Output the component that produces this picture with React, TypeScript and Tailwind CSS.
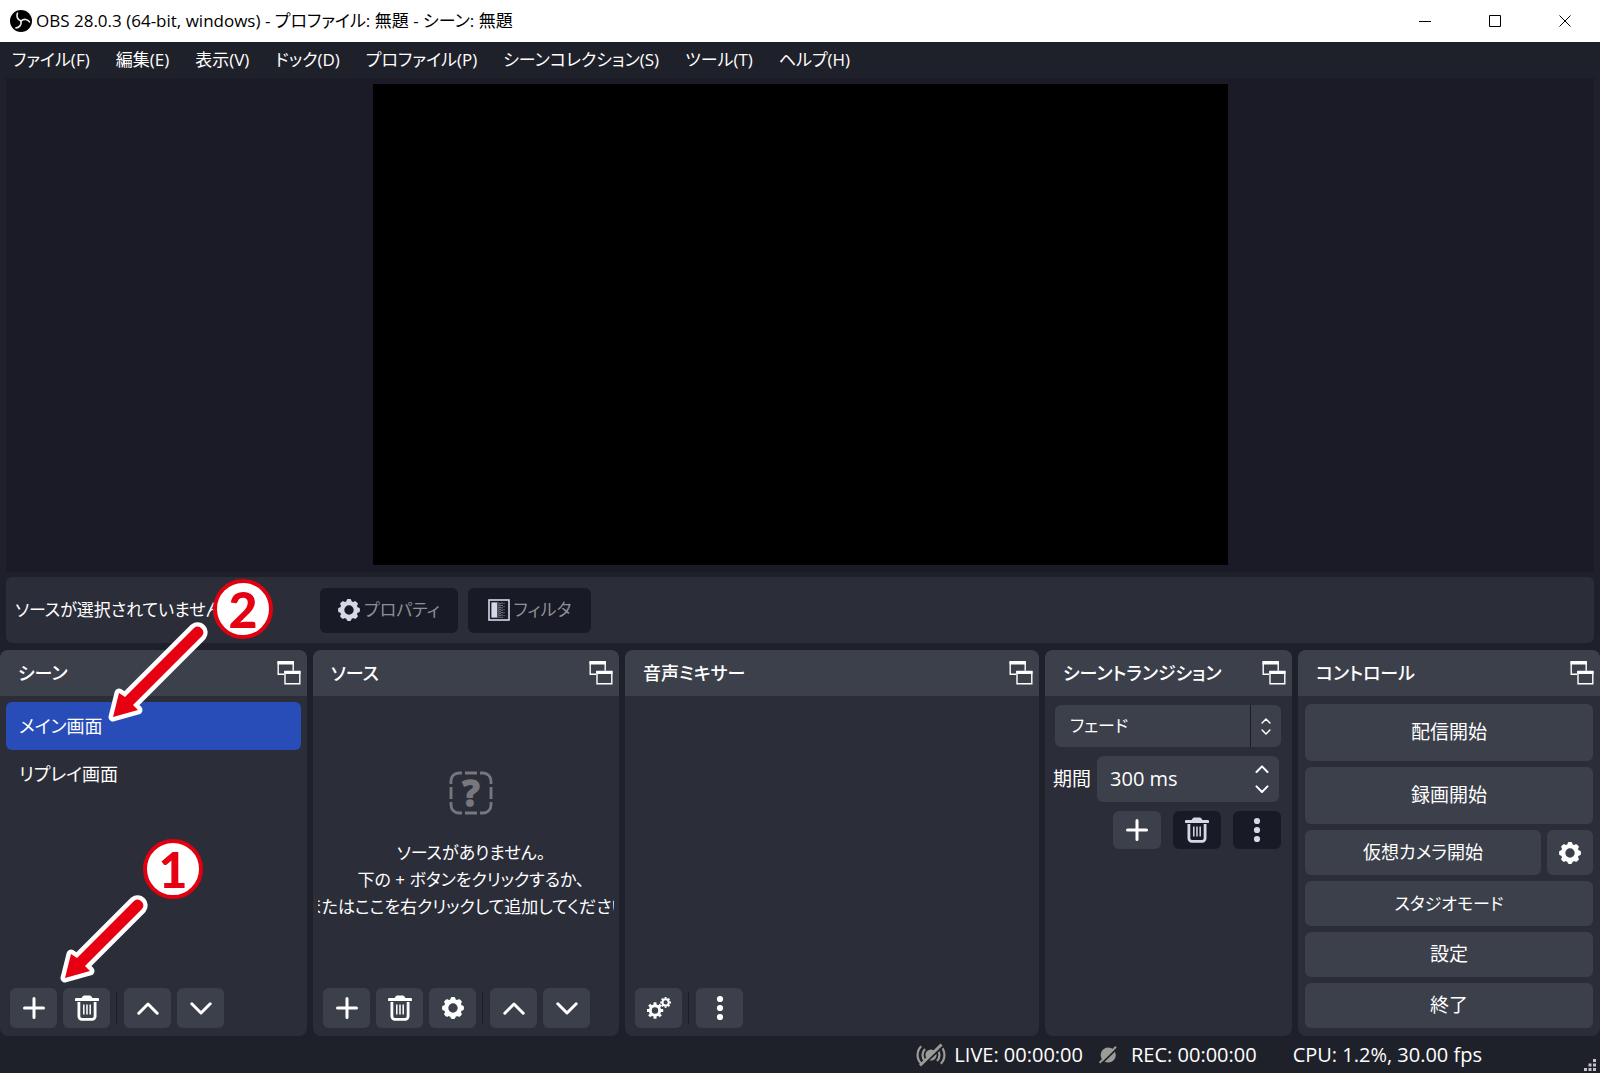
import type { ReactNode } from "react";

const menus = [
  "ファイル(F)",
  "編集(E)",
  "表示(V)",
  "ドック(D)",
  "プロファイル(P)",
  "シーンコレクション(S)",
  "ツール(T)",
  "ヘルプ(H)",
];

const scenes = [
  { name: "メイン画面", selected: true },
  { name: "リプレイ画面", selected: false },
];

function ObsLogo() {
  return (
    <svg width="22" height="22" viewBox="0 0 22 22" fill="none">
      <circle cx="11" cy="11" r="11" fill="#000" />
      {[0, 120, 240].map((a) => (
        <path key={a} d="M7.5 3.2C6.1 6 7.2 9.6 11 11" transform={`rotate(${a} 11 11)`} stroke="#e8e8e8" strokeWidth="1.7" strokeLinecap="round" />
      ))}
    </svg>
  );
}

function PlusIcon() {
  return (
    <svg width="22" height="22" viewBox="0 0 22 22" stroke="currentColor" strokeWidth="3" strokeLinecap="round">
      <path d="M11 1.5v19M1.5 11h19" />
    </svg>
  );
}

function TrashIcon() {
  return (
    <svg width="24" height="26" viewBox="0 0 24 26" fill="none" stroke="currentColor">
      <path d="M1.2 4.6h21.6" strokeWidth="3" strokeLinecap="round" />
      <path d="M7 3l1.5-2h7L17 3z" fill="currentColor" strokeWidth="1" />
      <path d="M3.9 7v14.3a3 3 0 0 0 3 3h10.2a3 3 0 0 0 3-3V7" strokeWidth="2.8" />
      <path d="M8.8 9.5v10M12 9.5v10M15.2 9.5v10" strokeWidth="1.5" />
    </svg>
  );
}

function ChevronIcon({ down = false }: { down?: boolean }) {
  return (
    <svg width="22" height="13" viewBox="0 0 22 13" fill="none" stroke="currentColor" strokeWidth="3" strokeLinecap="round" strokeLinejoin="round">
      <path d={down ? "M1.8 1.8l9.2 9.2 9.2-9.2" : "M1.8 11.2l9.2-9.2 9.2 9.2"} />
    </svg>
  );
}

function SmallChevron({ down = false, size = 14 }: { down?: boolean; size?: number }) {
  return (
    <svg width={size} height={size * 0.6} viewBox="0 0 14 8" fill="none" stroke="currentColor" strokeWidth="2" strokeLinecap="round" strokeLinejoin="round">
      <path d={down ? "M1.5 1.2L7 6.8l5.5-5.6" : "M1.5 6.8L7 1.2l5.5 5.6"} />
    </svg>
  );
}

const teeth = [0, 45, 90, 135, 180, 225, 270, 315];

function GearIcon() {
  return (
    <svg width="22" height="22" viewBox="-11 -11 22 22" fill="none" stroke="currentColor">
      <circle r="6.9" strokeWidth="4.4" />
      {teeth.map((a) => (
        <path key={a} d="M-1.6 -8.2L-1.1 -9.7H1.1L1.6 -8.2z" transform={`rotate(${a})`} strokeWidth="2.4" strokeLinejoin="round" fill="currentColor" />
      ))}
    </svg>
  );
}

function ThinCog({ x, y, r }: { x: number; y: number; r: number }) {
  return (
    <g transform={`translate(${x} ${y}) scale(${r / 11})`} fill="none" stroke="currentColor">
      <circle r="6.3" strokeWidth="4" />
      {teeth.map((a) => (
        <path key={a} d="M0 -7.5V-11" transform={`rotate(${a})`} strokeWidth="4" />
      ))}
    </g>
  );
}

function GearsIcon() {
  return (
    <svg width="24" height="22" viewBox="0 0 24 22">
      <ThinCog x={8} y={13.5} r={8.2} />
      <ThinCog x={18.6} y={5.4} r={5.4} />
    </svg>
  );
}

function DotsIcon() {
  return (
    <svg width="8" height="26" viewBox="0 0 8 26" fill="currentColor">
      <circle cx="4" cy="4" r="3.1" />
      <circle cx="4" cy="13" r="3.1" />
      <circle cx="4" cy="22" r="3.1" />
    </svg>
  );
}

function FloatIcon() {
  return (
    <svg width="24" height="24" viewBox="0 0 24 24" fill="none" stroke="currentColor" strokeWidth="1.4">
      <path d="M7 13.3H1.2V.8h15v9" />
      <path d="M.5 2h16.4" strokeWidth="3" />
      <path d="M8 10.5h14.8v12.3H8z" />
      <path d="M7.3 11.5h16.2" strokeWidth="3" />
    </svg>
  );
}

function FilterIcon() {
  return (
    <svg width="22" height="22" viewBox="0 0 22 22">
      <rect x="1" y="1" width="20" height="20" fill="none" stroke="currentColor" strokeWidth="1.6" />
      <rect x="3.4" y="3.4" width="5.6" height="15.2" fill="currentColor" />
      <g stroke="currentColor" fill="none">
        <path d="M10 3.5v15.2M12 4.3v14.4" strokeWidth="1.2" strokeDasharray="1 1" />
        <path d="M14 3.5v15.2" strokeWidth="1" strokeDasharray="1 1.4" />
        <path d="M16 4.3v14.4" strokeWidth="0.8" strokeDasharray="0.8 2.2" />
      </g>
    </svg>
  );
}

function NoSourceIcon() {
  return (
    <svg width="44" height="44" viewBox="0 0 44 44" fill="none" stroke="#77787f" strokeWidth="2.8" className="shrink-0 overflow-visible">
      <path d="M1.9 13V10a8 8 0 0 1 8-8h3M31 2h3a8 8 0 0 1 8 8v3M42 31v3a8 8 0 0 1-8 8h-3M13 42h-3a8 8 0 0 1-8-8v-3" />
      <path d="M16 2h12M16 42h12M2 16v12M42 16v12" />
      <text x="22" y="35" textAnchor="middle" fill="#77787f" strokeWidth="1.6" className="font-['Open_Sans'] text-[36px] font-bold">?</text>
    </svg>
  );
}

function LiveOffIcon() {
  return (
    <svg width="30" height="24" viewBox="0 0 30 24" fill="none" stroke="#9b9b98" strokeWidth="2.2">
      <path d="M5.2 3.2a12.5 12.5 0 0 0 0 17.6M9 6a8.5 8.5 0 0 0 0 12M24.8 3.2a12.5 12.5 0 0 1 0 17.6M21 6a8.5 8.5 0 0 1 0 12" />
      <circle cx="15" cy="12" r="5.6" fill="#9b9b98" stroke="none" />
      <path d="M5.5 23.5L27 3.5" stroke="#1f212a" strokeWidth="2" />
      <path d="M4 22.5L25.5 1.5" strokeWidth="2.8" />
    </svg>
  );
}

function RecOffIcon() {
  return (
    <svg width="18" height="18" viewBox="0 0 18 18" fill="none">
      <circle cx="9.2" cy="9" r="7.6" fill="#9b9b98" />
      <path d="M1.7 18.4L18.4 2.2" stroke="#1f212a" strokeWidth="1.8" />
      <path d="M.6 16.8L17 .8" stroke="#9b9b98" strokeWidth="2" />
    </svg>
  );
}

// length is the distance from the tip to the centre of the round tail on each axis
function Arrow({ length }: { length: number }) {
  const l = length;
  const d = `M0 0L6 -24L12 -20L${l - 4} ${-l - 4}A5.7 5.7 0 0 1 ${l + 4} ${-l + 4}L20 -12L25 -7Z`;
  return (
    <svg width={l + 16} height={l + 16} viewBox={`-6 ${-l - 10} ${l + 16} ${l + 16}`} strokeLinejoin="round">
      <path d={d} fill="#fff" stroke="#fff" strokeWidth="9" />
      <path d={d} fill="#e60012" />
    </svg>
  );
}

function Badge({ children }: { children: ReactNode }) {
  return (
    <span className="flex size-[60px] items-center justify-center rounded-full border-4 border-[#e0000f] bg-white font-['Lato'] text-[50px] leading-[52px] font-black text-[#e60012]">
      {children}
    </span>
  );
}

function ToolButton({ label, children }: { label: string; children: ReactNode }) {
  return (
    <button aria-label={label} className="flex h-10 w-[47px] items-center justify-center rounded-md bg-[#3c404b]">
      {children}
    </button>
  );
}

function Separator() {
  return <span className="mr-px h-8 w-px bg-[#1b1d26]" />;
}

function Dock({ title, children }: { title: string; children: ReactNode }) {
  return (
    <section className="flex min-w-0 flex-col overflow-hidden rounded-lg bg-[#2b2d38]">
      <header className="flex h-[46px] shrink-0 items-center justify-between bg-[#3c404b] pr-[6px] pl-[18px]">
        <h2 className="text-[18px] font-medium whitespace-nowrap">{title}</h2>
        <button aria-label="ドックを切り離す">
          <FloatIcon />
        </button>
      </header>
      {children}
    </section>
  );
}

function ControlButton({ children, className }: { children: ReactNode; className: string }) {
  return <button className={`w-full rounded-md bg-[#3c404b] ${className}`}>{children}</button>;
}

export default function App() {
  return (
    <div className="flex min-h-screen flex-col bg-[#1f212a] font-['Open_Sans','Noto_Sans_CJK_JP',sans-serif] text-white [font-feature-settings:'palt']">
      <header className="flex h-[42px] items-center justify-between bg-white pl-[10px] text-black">
        <div className="flex items-center gap-1">
          <ObsLogo />
          <h1 className="text-[17px]">OBS 28.0.3 (64-bit, windows) - プロファイル: 無題 - シーン: 無題</h1>
        </div>
        <div className="flex">
          <button aria-label="最小化" className="flex h-[42px] w-[70px] items-center justify-center">
            <svg width="12" height="12" stroke="currentColor"><path d="M0 6.5h12" /></svg>
          </button>
          <button aria-label="最大化" className="flex h-[42px] w-[70px] items-center justify-center">
            <svg width="12" height="12" fill="none" stroke="currentColor"><path d="M.5.5h11v11H.5z" /></svg>
          </button>
          <button aria-label="閉じる" className="flex h-[42px] w-[70px] items-center justify-center">
            <svg width="12" height="12" stroke="currentColor"><path d="M.5.5l11 11M11.5.5l-11 11" /></svg>
          </button>
        </div>
      </header>

      <nav className="flex h-9 items-center gap-[26px] px-3 text-[17px]">
        {menus.map((menu) => (
          <button key={menu} className="whitespace-nowrap">{menu}</button>
        ))}
      </nav>

      <main className="mx-[6px] flex flex-1 items-start justify-center bg-[#1a1b26] pt-[6px] pb-[7px]">
        <div className="aspect-video w-full max-w-[855px] bg-black" />
      </main>

      <div className="relative mx-[6px] mt-[5px] flex h-[66px] items-center rounded-md bg-[#2b2d38] pl-[9px]">
        <p className="w-[305px] text-[17px] whitespace-nowrap">ソースが選択されていません</p>
        <div className="flex gap-[10px] text-[17px] text-[#8f9097]">
          <button className="flex h-[45px] w-[138px] items-center justify-center gap-1 rounded-md bg-[#181a25]">
            <span className="text-[#d5d8e6]"><GearIcon /></span>
            プロパティ
          </button>
          <button className="flex h-[45px] w-[123px] items-center justify-center gap-1 rounded-md bg-[#181a25]">
            <span className="text-[#d5d8e6]"><FilterIcon /></span>
            フィルタ
          </button>
        </div>
        <div className="absolute top-[2px] left-[207px]"><Badge>2</Badge></div>
        <div className="absolute top-[45px] left-[101px] z-10"><Arrow length={85} /></div>
      </div>

      <div className="mt-[7px] grid h-[386px] grid-cols-[307fr_306fr_414fr_247fr_302fr] gap-[6px]">
        <Dock title="シーン">
          <ul className="flex-1 px-[6px] pt-[6px] text-[18px]">
            {scenes.map((scene) => (
              <li key={scene.name}>
                <button className={`h-12 w-full rounded-md px-[13px] text-left ${scene.selected ? "bg-[#284cb8]" : ""}`}>
                  {scene.name}
                </button>
              </li>
            ))}
          </ul>
          <div className="relative flex items-center gap-[6px] px-[10px] pb-2">
            <ToolButton label="シーンを追加"><PlusIcon /></ToolButton>
            <ToolButton label="シーンを削除"><TrashIcon /></ToolButton>
            <Separator />
            <ToolButton label="上へ"><ChevronIcon /></ToolButton>
            <ToolButton label="下へ"><ChevronIcon down /></ToolButton>
            <div className="absolute bottom-[137px] left-[143px]"><Badge>1</Badge></div>
            <div className="absolute bottom-[52px] left-[59px]"><Arrow length={73} /></div>
          </div>
        </Dock>

        <Dock title="ソース">
          <div className="mx-[5px] flex flex-1 flex-col items-center overflow-hidden pt-[75px] pl-[10px]">
            <NoSourceIcon />
            <p className="mt-6 text-center text-[17px] leading-[27px] whitespace-nowrap">
              ソースがありません。<br />
              下の + ボタンをクリックするか、<br />
              またはここを右クリックして追加してください。
            </p>
          </div>
          <div className="flex items-center gap-[6px] px-[10px] pb-2">
            <ToolButton label="ソースを追加"><PlusIcon /></ToolButton>
            <ToolButton label="ソースを削除"><TrashIcon /></ToolButton>
            <ToolButton label="ソースのプロパティ"><GearIcon /></ToolButton>
            <Separator />
            <ToolButton label="上へ"><ChevronIcon /></ToolButton>
            <ToolButton label="下へ"><ChevronIcon down /></ToolButton>
          </div>
        </Dock>

        <Dock title="音声ミキサー">
          <div className="flex-1" />
          <div className="flex items-center gap-[6px] px-[10px] pb-2">
            <ToolButton label="オーディオの詳細プロパティ"><GearsIcon /></ToolButton>
            <Separator />
            <ToolButton label="ミキサーメニュー"><DotsIcon /></ToolButton>
          </div>
        </Dock>

        <Dock title="シーントランジション">
          <div className="flex flex-col gap-[9px] pt-[9px] pr-[11px] pl-2">
            <div className="relative ml-[2px] h-[42px]">
              <select aria-label="トランジション" className="size-full appearance-none rounded-md bg-[#3c404b] px-[15px] text-[17px]">
                <option>フェード</option>
              </select>
              <span className="pointer-events-none absolute inset-y-0 right-0 flex w-[31px] flex-col items-center justify-center gap-[5px] border-l border-[#1b1d26]">
                <SmallChevron size={10} />
                <SmallChevron size={10} down />
              </span>
            </div>
            <div className="flex items-center gap-[6px] pr-[2px]">
              <label htmlFor="duration" className="shrink-0 text-[19px]">期間</label>
              <div className="flex h-[46px] min-w-0 flex-1 items-center rounded-md bg-[#3c404b] pr-[10px] pl-[13px]">
                <input id="duration" defaultValue="300 ms" className="w-full min-w-0 bg-transparent text-[20px] outline-none" />
                <div className="flex flex-col gap-3">
                  <button aria-label="増やす"><SmallChevron /></button>
                  <button aria-label="減らす"><SmallChevron down /></button>
                </div>
              </div>
            </div>
            <div className="flex justify-end gap-3">
              <button aria-label="追加" className="flex h-[38px] w-12 items-center justify-center rounded-md bg-[#3c404b]"><PlusIcon /></button>
              <button aria-label="削除" className="flex h-[38px] w-12 items-center justify-center rounded-md bg-[#181a25] text-[#d5d8e6]"><TrashIcon /></button>
              <button aria-label="メニュー" className="flex h-[38px] w-12 items-center justify-center rounded-md bg-[#181a25] text-[#d5d8e6]"><DotsIcon /></button>
            </div>
          </div>
        </Dock>

        <Dock title="コントロール">
          <div className="flex flex-col gap-[6px] px-[7px] pt-2">
            <ControlButton className="h-[57px] text-[19px]">配信開始</ControlButton>
            <ControlButton className="h-[57px] text-[19px]">録画開始</ControlButton>
            <div className="flex gap-[6px]">
              <ControlButton className="h-[45px] text-[18px]">仮想カメラ開始</ControlButton>
              <button aria-label="仮想カメラの設定" className="flex h-[45px] w-[46px] shrink-0 items-center justify-center rounded-md bg-[#3c404b]">
                <GearIcon />
              </button>
            </div>
            <ControlButton className="h-[45px] text-[17px]">スタジオモード</ControlButton>
            <ControlButton className="h-[45px] text-[19px]">設定</ControlButton>
            <ControlButton className="h-[45px] text-[19px]">終了</ControlButton>
          </div>
        </Dock>
      </div>

      <footer className="flex h-[37px] items-center justify-end pr-1 text-[20px]">
        <div className="flex items-center gap-2">
          <LiveOffIcon />
          <span>LIVE: 00:00:00</span>
        </div>
        <div className="ml-4 flex items-center gap-[14px]">
          <RecOffIcon />
          <span>REC: 00:00:00</span>
        </div>
        <span className="ml-9">CPU: 1.2%, 30.00 fps</span>
        <svg width="12" height="12" className="mb-[2px] ml-[102px] self-end" fill="#c4c4c6">
          <path d="M9 0h3v3H9zM9 4.5h3v3H9zM4.5 4.5h3v3h-3zM9 9h3v3H9zM4.5 9h3v3h-3zM0 9h3v3H0z" />
        </svg>
      </footer>
    </div>
  );
}
